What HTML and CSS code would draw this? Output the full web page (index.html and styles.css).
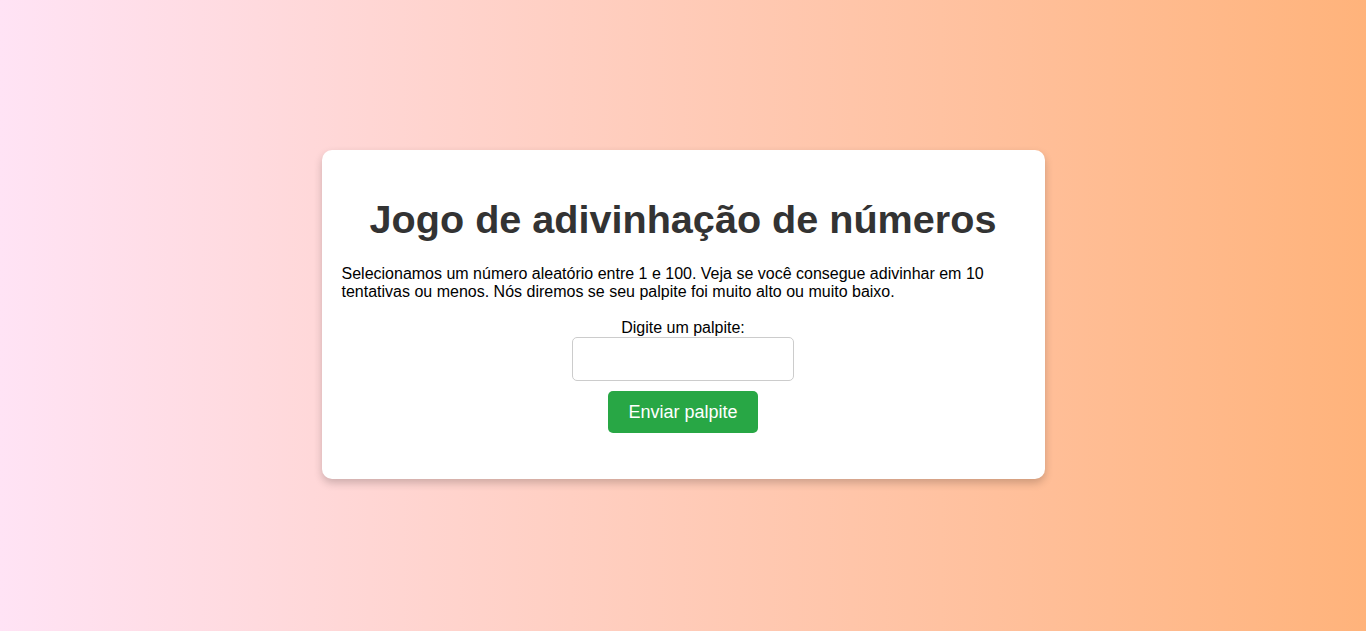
FILE: index.html
```html
<!DOCTYPE html>
<html lang="pt">
<head>
<meta charset="utf-8">
<title>Jogo de adivinhação de números</title>
<link rel="stylesheet" href="styles.css">
</head>
<body>
<div class="card">
  <h1 class="title">Jogo de adivinhação de números</h1>
  <p class="intro">Selecionamos um número aleatório entre 1 e 100. Veja se você consegue adivinhar em 10 tentativas ou menos. Nós diremos se seu palpite foi muito alto ou muito baixo.</p>
  <form class="form">
    <label class="label" for="guess">Digite um palpite:</label>
    <input class="guess" type="number" id="guess">
    <button class="submit" type="button">Enviar palpite</button>
  </form>
</div>
</body>
</html>
```
FILE: styles.css
```css
html, body {
  margin: 0;
  padding: 0;
}
html {
  background: linear-gradient(to right, #ffe3f5, #ffb37b);
  min-height: 100%;
}
body {
  font-family: "Liberation Sans", Arial, sans-serif;
  min-height: calc(100vh - 2px);
  display: flex;
  align-items: center;
  justify-content: center;
}
.card {
  width: 50%;
  padding: 20px;
  background: #fff;
  border-radius: 10px;
  box-shadow: 0 4px 8px rgba(0, 0, 0, 0.2);
}
.title {
  font-size: 39.6px;
  color: #333;
  text-align: center;
  margin: 27px 0 23px;
}
.intro {
  font-size: 16px;
  color: #000;
  margin: 16px 0 18px;
}
.form {
  display: flex;
  flex-direction: column;
  align-items: center;
  margin-bottom: 26px;
}
.label {
  font-size: 16px;
}
.guess {
  box-sizing: border-box;
  width: 222px;
  height: 44px;
  padding: 10px;
  font-size: 16px;
  border: 1px solid #ccc;
  border-radius: 5px;
  margin-bottom: 10px;
}
.submit {
  font-family: "Liberation Sans", Arial, sans-serif;
  font-size: 18px;
  padding: 10px 20px;
  background: #28a745;
  color: #fff;
  border: none;
  border-radius: 5px;
  height: 42px;
}
```
